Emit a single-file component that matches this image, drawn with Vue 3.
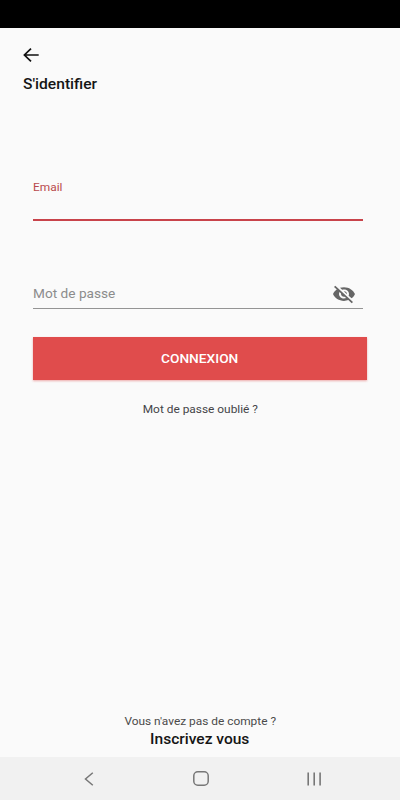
<template>
  <div class="screen">
    <div class="status-bar"></div>

    <header class="header">
      <button class="back" type="button" aria-label="Retour">
        <svg width="16" height="14" viewBox="0 0 16 14">
          <path d="M15.7 7H1.4M8 .6L1.4 7L8 13.4" fill="none" stroke="#111" stroke-width="1.7" />
        </svg>
      </button>
      <h1 class="title"><span class="wide">S'identifier</span></h1>
    </header>

    <form class="form" @submit.prevent>
      <label class="field field--active">
        <span class="field__label wide">Email</span>
        <input v-model="email" class="field__input" type="email">
      </label>

      <label class="field field--password">
        <input v-model="password" class="field__input" :type="hidden ? 'password' : 'text'">
        <span v-if="!password" class="field__placeholder wide">Mot de passe</span>
        <svg class="eye" width="24" height="22" viewBox="0 0 24 24" preserveAspectRatio="none" @click.prevent="hidden = !hidden">
          <path fill="#666" d="M12 7c2.76 0 5 2.24 5 5 0 .65-.13 1.26-.36 1.83l2.92 2.92c1.51-1.26 2.7-2.89 3.43-4.75-1.73-4.39-6-7.5-11-7.5-1.4 0-2.74.25-3.98.7l2.16 2.16C10.74 7.13 11.35 7 12 7zM2 4.27l2.28 2.28.46.46C3.08 8.3 1.78 10.02 1 12c1.73 4.39 6 7.5 11 7.5 1.55 0 3.03-.3 4.38-.84l.42.42L19.73 22 21 20.73 3.27 3 2 4.27zM7.53 9.8l1.55 1.55c-.05.21-.08.43-.08.65 0 1.66 1.34 3 3 3 .22 0 .44-.03.65-.08l1.55 1.55c-.67.33-1.41.53-2.2.53-2.76 0-5-2.24-5-5 0-.79.2-1.53.53-2.2zm4.31-.78l3.15 3.15.02-.16c0-1.66-1.34-3-3-3l-.17.01z" />
        </svg>
      </label>

      <button class="submit" type="submit"><span class="wide">CONNEXION</span></button>
      <a class="forgot"><span class="wide">Mot de passe oublié ?</span></a>
    </form>

    <footer class="signup">
      <span class="signup__question wide">Vous n'avez pas de compte ?</span>
      <a class="signup__link wide">Inscrivez vous</a>
    </footer>

    <nav class="nav-bar">
      <svg width="10" height="14" viewBox="0 0 10 14">
        <path d="M8.8 .8L1.5 7L8.8 13.2" fill="none" stroke="#777" stroke-width="1.5" />
      </svg>
      <svg width="16" height="15" viewBox="0 0 16 15">
        <rect x=".8" y=".8" width="14.4" height="13.4" rx="4" fill="none" stroke="#777" stroke-width="1.5" />
      </svg>
      <svg width="14" height="14" viewBox="0 0 14 14">
        <path d="M1.2 .5V13.5M7.2 .5V13.5M13.1 .5V13.5" fill="none" stroke="#777" stroke-width="1.6" />
      </svg>
    </nav>
  </div>
</template>

<script setup>
import { ref } from 'vue';

const email = ref('');
const password = ref('');
const hidden = ref(true);
</script>

<style>
body {
  margin: 0;
}
</style>

<style scoped>
.screen {
  display: flex;
  flex-direction: column;
  width: 400px;
  height: 800px;
  overflow: hidden;
  background: #fafafa;
  font-family: Roboto, sans-serif;
}
.screen * {
  box-sizing: border-box;
}
.status-bar {
  height: 28px;
  background: #000;
}
.wide {
  display: inline-block;
  white-space: nowrap;
  transform: scaleX(1.08);
}
.header {
  height: 153px;
  padding: 20px 23px 0;
}
.back {
  display: block;
  padding: 0;
  border: 0;
  background: none;
}
.back svg {
  display: block;
}
.title {
  margin: 13px 0 0;
  font-size: 14px;
  font-weight: 500;
  line-height: 18px;
  color: #151515;
}
.title .wide,
.field .wide {
  transform-origin: left;
}
.title .wide {
  transform: scaleX(1.115);
}
.form {
  display: flex;
  flex-direction: column;
  padding: 0 33px;
}
.field {
  display: flex;
  width: 330px;
}
.field--active {
  flex-direction: column;
  height: 40px;
  border-bottom: 2px solid #c8434a;
}
.field__label {
  align-self: flex-start;
  font-size: 11px;
  line-height: 14px;
  color: #b9494c;
}
.field__input {
  flex: 1;
  width: 0;
  min-height: 0;
  padding: 0;
  border: 0;
  outline: 0;
  background: none;
  font: inherit;
}
.field--password {
  align-items: center;
  height: 30px;
  margin-top: 58px;
  padding-right: 7px;
  border-bottom: 1px solid #949494;
}
.field .field__placeholder {
  order: -1;
  font-size: 13px;
  line-height: 18px;
  color: #8c8c8c;
  transform: scaleX(1.05);
}
.eye {
  flex: none;
}
.submit {
  width: 334px;
  height: 43px;
  margin-top: 28px;
  padding: 0;
  border: 0;
  background: #e04c4c;
  box-shadow: 0 1px 2px rgba(224, 76, 76, 0.45);
  font: 500 13px Roboto, sans-serif;
  color: #fff;
}
.submit .wide {
  transform: scaleX(1.055);
}
.forgot {
  margin-top: 22px;
  font-size: 11px;
  line-height: 16px;
  text-align: center;
  color: #444448;
}
.signup {
  display: flex;
  flex-direction: column;
  align-items: center;
  margin-top: auto;
  padding-bottom: 9px;
}
.signup__question {
  font-size: 11px;
  line-height: 15px;
  color: #4a4a4a;
}
.signup__link {
  margin-top: 1px;
  font-size: 14px;
  font-weight: 500;
  line-height: 18px;
  color: #151515;
}
.signup .signup__link {
  transform: scaleX(1.11);
}
.nav-bar {
  display: flex;
  align-items: center;
  justify-content: space-between;
  height: 43px;
  padding: 0 79px 0 84px;
  background: #f1f1f1;
}
</style>
